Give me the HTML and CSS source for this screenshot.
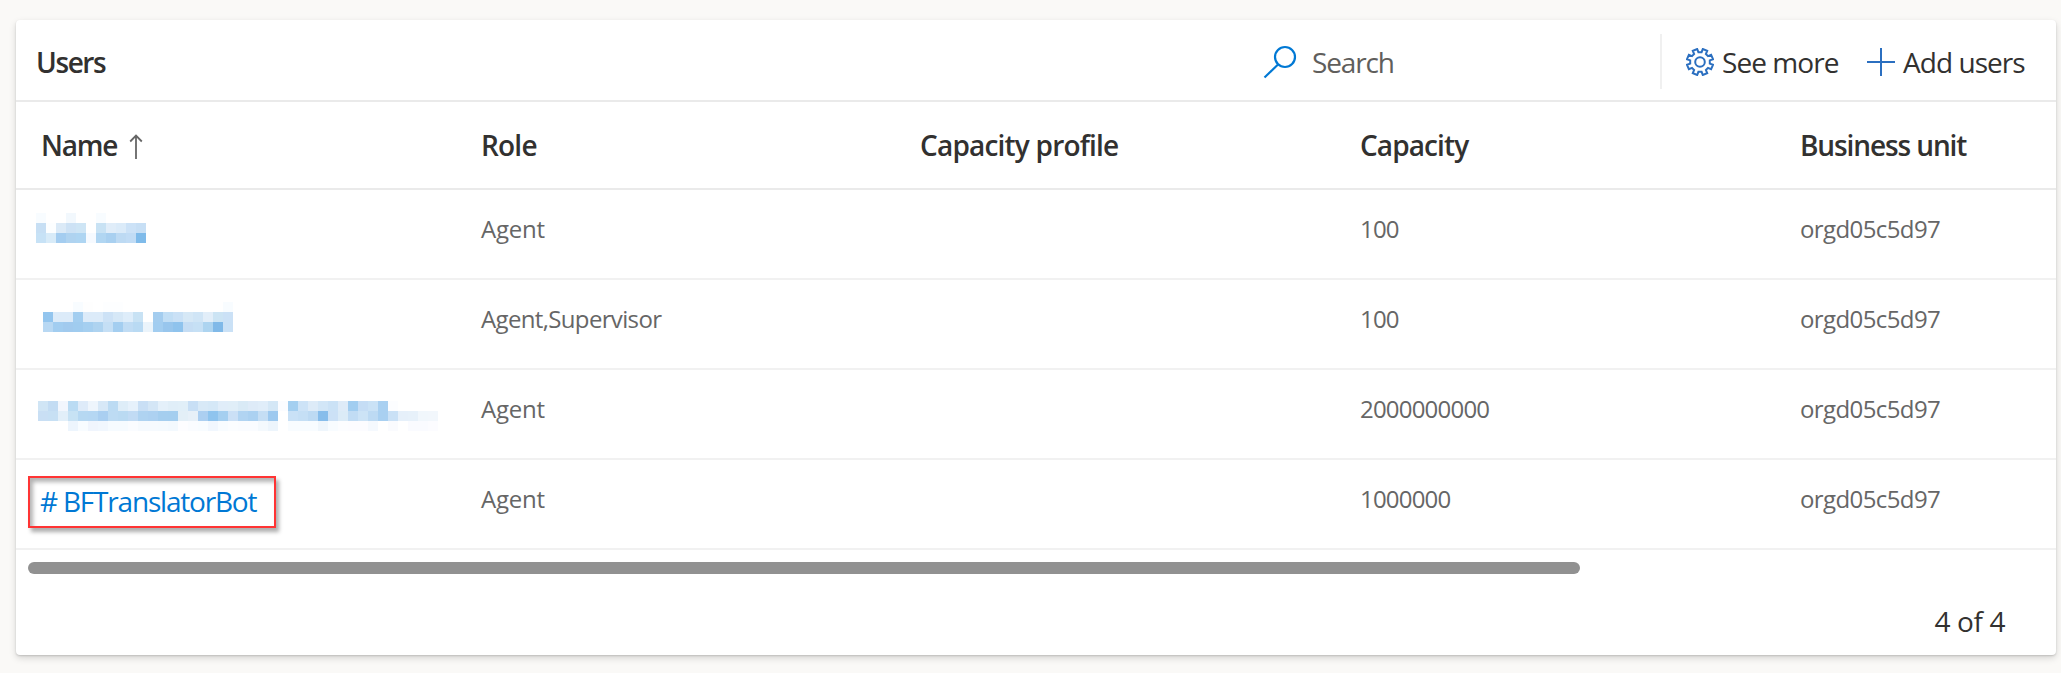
FILE: index.html
```html
<!DOCTYPE html>
<html lang="en">
<head>
<meta charset="utf-8">
<title>Users</title>
<link rel="stylesheet" href="styles.css">
</head>
<body>
<main class="card">
  <header class="toolbar">
    <h1 class="title">Users</h1>
    <label class="search">
      <svg class="search-icon" width="34" height="34" viewBox="0 0 34 34"><circle cx="22" cy="12" r="10" /><path d="M15 19.5 1.5 32.5" /></svg>
      <span class="search-text">Search</span>
    </label>
    <div class="actions">
      <button class="action see-more">
        <svg class="icon" width="28" height="28" viewBox="0 0 28 28"><circle cx="14" cy="14" r="4.8"/><path d="M11.2 1 12.4 4.2 15.6 4.2 16.8 1 21.2 2.9 19.9 6 22 8.1 25.1 6.8 27 11.2 23.8 12.4V15.6L27 16.8 25.1 21.2 22 19.9 19.9 22 21.2 25.1 16.8 27 15.6 23.8H12.4L11.2 27 6.8 25.1 8.1 22 6 19.9 2.9 21.2 1 16.8 4.2 15.6V12.4L1 11.2 2.9 6.8 6 8.1 8.1 6 6.8 2.9Z"/></svg>
        <span>See more</span>
      </button>
      <button class="action add-users">
        <svg class="icon" width="28" height="28" viewBox="0 0 28 28"><path d="M14 0V28M0 14H28"/></svg>
        <span>Add users</span>
      </button>
    </div>
  </header>
  <section class="table">
    <div class="row head">
      <div class="name-head"><span>Name</span><svg class="sort" width="14" height="25" viewBox="0 0 14 25"><path d="M7 25V1.5M1.2 7.5 7 1.5 12.8 7.5"/></svg></div>
      <div class="role-head">Role</div><div class="profile-head">Capacity profile</div><div class="cap-head">Capacity</div><div class="unit-head">Business unit</div>
    </div>
    <div class="row"><div><svg class="mosaic m1" data-user="0"></svg></div><div class="role">Agent</div><div></div><div class="num">100</div><div class="unit">orgd05c5d97</div></div>
    <div class="row"><div><svg class="mosaic m2" data-user="1"></svg></div><div class="role roles">Agent,Supervisor</div><div></div><div class="num">100</div><div class="unit">orgd05c5d97</div></div>
    <div class="row"><div><svg class="mosaic m3" data-user="2"></svg></div><div class="role">Agent</div><div></div><div class="num">2000000000</div><div class="unit">orgd05c5d97</div></div>
    <div class="row"><div><a class="bot"># BFTranslatorBot</a></div><div class="role">Agent</div><div></div><div class="num">1000000</div><div class="unit">orgd05c5d97</div></div>
  </section>
  <div class="scrollbar"></div>
  <footer class="footer">4 of 4</footer>
</main>
<script src="mosaic.js"></script>
</body>
</html>
```
FILE: styles.css
```css
* { box-sizing: border-box; }
body { margin: 0; height: 673px; padding: 20px 5px 18px 16px; background: #faf9f7; overflow: hidden; font-family: "Open Sans", "Noto Sans", sans-serif; color: #323130; }
.card { height: 635px; background: #fff; border-radius: 4px; box-shadow: 0 3px 7px rgba(0,0,0,.15), 0 1px 2px rgba(0,0,0,.14); }
.toolbar { height: 82px; border-bottom: 2px solid #eaeaea; display: flex; align-items: center; padding: 4px 0 0 20px; }
.title { margin: 0; width: 1227px; font-size: 28px; line-height: 40px; font-weight: 600; letter-spacing: -1.4px; }
.search { width: 397px; display: flex; align-items: center; gap: 15px; font-size: 28px; line-height: 40px; letter-spacing: -1.15px; color: #605e5c; }
.search-text { margin-bottom: 1px; }
svg { display: block; fill: none; flex: none; }
.search-icon { stroke: #0078d4; stroke-width: 2.2; }
.actions { height: 55px; margin-bottom: 2px; border-left: 2px solid #f0f0f0; padding-left: 24px; display: flex; align-items: center; }
.action { border: 0; background: none; padding: 2px 0 0; display: flex; align-items: center; gap: 8px; font: 28px/40px "Open Sans", "Noto Sans", sans-serif; letter-spacing: -.95px; color: #323130; white-space: nowrap; }
.action span { margin-bottom: 1px; }
.see-more { width: 181px; }
.icon { stroke: #2b6fc0; stroke-width: 2; }
.row { height: 90px; border-bottom: 2px solid #f1f1f1; display: grid; grid-template-columns: 440px 440px 440px 440px 1fr; padding-left: 24px; font-size: 24px; line-height: 34px; letter-spacing: -.8px; color: #666; }
.row > div { padding-top: 22px; white-space: nowrap; }
.row > .role { letter-spacing: -.25px; padding-left: 1px; }
.row > .roles { letter-spacing: -.65px; }
.row > .unit { letter-spacing: -.6px; }
.head { height: 88px; border-bottom-color: #eaeaea; font-size: 28px; line-height: 40px; font-weight: 600; color: #323130; }
.row.head > div { padding-top: 23px; }
.name-head { display: flex; gap: 12px; letter-spacing: -1.2px; padding-left: 1px; }
.role-head { padding-left: 1px; }
.cap-head { letter-spacing: -.9px; }
.unit-head { letter-spacing: -1.1px; }
.sort { margin-top: 9px; stroke: #666; stroke-width: 1.8; }
.row > div:first-child:has(.mosaic) { padding-top: 22px; }
.mosaic { shape-rendering: crispEdges; }
.m1 { margin-left: -4px; margin-top: 1px; }
.m2 { margin-left: -2px; }
.m3 { margin-left: -2px; margin-top: 9px; }
.row > div:first-child:has(.bot) { padding-top: 16px; }
.bot { display: block; width: 248px; height: 52px; margin-left: -12px; padding-left: 10px; border: 2px solid #ff3434; color: #0078d4; font-size: 28px; line-height: 47px; letter-spacing: -1.2px; box-shadow: 3px 4px 4px rgba(0,0,0,.32), inset 3px 4px 4px rgba(0,0,0,.3); }
.scrollbar { width: 1552px; height: 12px; margin: 12px 0 0 12px; border-radius: 6px; background: #919191; }
.footer { margin-top: 27px; padding-right: 51px; text-align: right; font-size: 28px; line-height: 40px; letter-spacing: -.4px; }
```
FILE: mosaic.js
```js
// Redacted names: 10px blocks, one string of colours per line.
const users = [
  { x: 0, rows: [
    "f8fcff - - f2f8fd - - f8fcff",
    "c7dff4 fcfeff dbeaf7 cde2f5 cee5f5 - c8e2f4 e0edf9 dbebf9 cce2f7 c7dff5",
    "c7e2f6 d8ebf8 a4cdf0 afd3f0 aed5f2 f6faff b1d6f2 a9d0f0 bddaf3 c1dcf5 7fbbea"] },
  { x: 5, rows: [
    "- - - f8fcff fefefe - fdfeff fdfeff - - - - - - - - - - f8fcff",
    "93c5ee dcebf9 dcebf9 a3cef0 dcebf9 dcebf9 cde2f6 d6e8f7 deedfa c8e2f4 - a4cdef c1def5 cae1f6 d6e8f6 d0e5f6 e2eef9 cce4f4 cbe1f6",
    "b8d8f3 a2cdf0 a1caee a0ccef a5cff0 aed3f0 c5dff5 a4cef0 c0dcf4 b9daf3 ebf4fb a2cdf0 98c6ed 8fc3ed c5ddf4 c6e0f5 add4f0 80b9e8 cae1f6"] },
  { x: 0, rows: [
    "d0e5f5 c3dcf3 f2f6fd badbf3 deebf9 eef5fc d7e8f7 bcdbf3 deedf8 e6f1fb c9dff5 d4e6f6 e4f0fa e0eef8 e1eff8 c8dff5 d8e9f7 d5e8f7 e0edf9 e0eef8 d9eaf6 deebf8 e0edf9 d4e7f6 fbfcff a4cff0 cde3f7 ddebf8 d2e6f7 cbe2f6 deebf8 a1cdf0 c5ddf5 cae2f6 a9d0f1 fcfdff",
    "c9dff4 c7e0f4 e2eff9 c7e2f4 b6d8f2 b5d7f3 aacff1 bddbf3 badaf2 c1dbf4 afd3f1 add1f1 a5ceef a4ceef e3eff7 e7f0f8 accff1 8fc4ee a5cff0 cbe0f6 b1d4f2 abd1f1 c5def4 9dc9ef - c9e1f6 c5dff5 bddaf3 87bdeb cce1f6 dbebf7 c1dcf4 cce3f6 bddaf3 a9d0f1 cae1f6 e6f0fa e7f1fa f1f7fc f2f7fc",
    "- - - edf5fd f8fcff f0f5fd f1f7fe f6fbff f6fbff fafcff f6fafe f6fafe f5fafe f3f9fe fdfdff fafcff f8fcff f1f7fe f8fcff fbfdff fafcff fafcff f4f9fd edf5fc - f8fcff f8fcff f8fcff eff6fc f8fcff fcfdff fcfcff fcfcff f5f9fe - fafbfe - fafbff fafbff fcfcff"] }
];
document.querySelectorAll(".mosaic").forEach((svg) => {
  const { x: offset, rows } = users[svg.dataset.user];
  svg.setAttribute("width", 410);
  svg.setAttribute("height", 30);
  rows.forEach((line, y) => line.split(" ").forEach((color, x) => {
    if (color === "-") return;
    const block = document.createElementNS("http://www.w3.org/2000/svg", "rect");
    block.setAttribute("x", offset + x * 10);
    block.setAttribute("y", y * 10);
    block.setAttribute("width", 10);
    block.setAttribute("height", 10);
    block.setAttribute("fill", "#" + color);
    svg.append(block);
  }));
});
```
